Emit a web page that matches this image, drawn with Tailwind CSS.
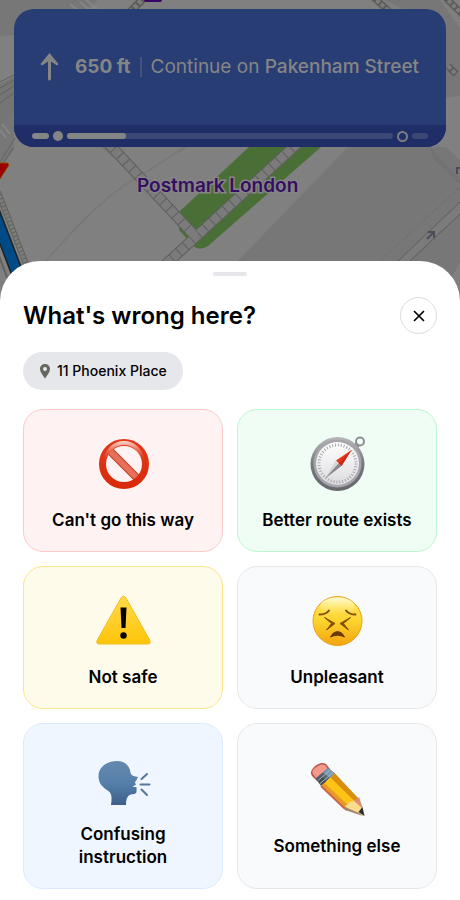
<!DOCTYPE html>
<html lang="en">
<head>
    <meta charset="UTF-8">
    <meta name="viewport" content="width=device-width, initial-scale=1.0">
    <title>Report a problem</title>
    <script src="https://cdn.jsdelivr.net/npm/@tailwindcss/browser@4"></script>
</head>
<body class="bg-[#808080] font-['Inter',sans-serif] text-black">
    <div class="relative flex min-h-screen flex-col overflow-hidden">

        <!-- Map -->
        <svg class="absolute inset-x-0 top-0 h-[300px] w-full" viewBox="0 0 460 300" preserveAspectRatio="xMidYMin slice" aria-hidden="true">
            <rect width="460" height="300" fill="#808080"/>
            <g fill="#777777">
                <path d="M0 0H98L60 32L0 36Z"/>
                <path d="M0 112L14 98V150L0 170Z"/>
                <path d="M384 0H440L460 28V96L446 98V30Z"/>
                <path d="M348 147H446L460 160V262L440 300H200Z"/>
                <path d="M100 147H116L122 154L114 158Z"/>
            </g>
            <path d="M430 147L460 180V184L434 160Z" fill="#727272"/>
            <path d="M0 84L14 77V112L0 126Z" fill="#757573"/>
            <path d="M0 82L14 75M0 88L14 80M0 95L14 86M0 103L14 93" stroke="#62625e" fill="none"/>
            <path d="M80 2L92 12M86 0L98 10M70 4L80 12M2 124L10 134M0 130L6 138" stroke="#868686" stroke-width="2"/>
            <!-- footbridges -->
            <g fill="none">
                <path d="M130 12L144 -2" stroke="#5c5c58" stroke-width="8"/>
                <path d="M130 12L144 -2" stroke="#7c7c7c" stroke-width="5" stroke-dasharray="4 2"/>
                <path d="M372 -4L390 12M444 -4L464 16M448 66L456 74" stroke="#5c5c58" stroke-width="7"/>
                <path d="M372 -4L390 12M444 -4L464 16M448 66L456 74" stroke="#7c7c7c" stroke-width="4" stroke-dasharray="4 2"/>
                <path d="M15 138L0 162M13 148L0 168" stroke="#62625f"/>
            </g>
            <path d="M45 262C80 222 106 196 136 178C158 166 172 154 186 147" fill="none" stroke="#797979" stroke-width="2"/>
            <!-- park -->
            <path d="M249 147L180 211L179 230L188 240C194 250 202 250 208 246L321 147Z" fill="#4a6f36"/>
            <!-- paths with steps -->
            <g fill="none">
                <path d="M108 143L195 236M298 143L164 266" stroke="#5f5f5e" stroke-width="11"/>
                <path d="M108 143L195 236M298 143L164 266" stroke="#7b7b7b" stroke-width="9" stroke-dasharray="8 1"/>
            </g>
            <!-- street on the right -->
            <path d="M460 214L410 261H398L460 202Z" fill="#7b7b7b"/>
            <path d="M460 202L398 261M460 214L410 261" stroke="#5d5d59" fill="none"/>
            <path d="M460 187L380 261" stroke="#717171" fill="none"/>
            <path d="M427 239L434 232M428 232H434V238M457 174V168H461" fill="none" stroke="#4f4b58" stroke-width="2"/>
            <!-- railway on the left -->
            <path d="M-2 192L26 264" stroke="#62625f" stroke-width="6"/>
            <path d="M-2 192L26 264" stroke="#7c7c7a" stroke-width="4" stroke-dasharray="3 1"/>
            <path d="M-8 207L18 275" stroke="#1d2225" stroke-width="13"/>
            <path d="M-8 207L18 275" stroke="#004a86" stroke-width="10"/>
            <path d="M-6 242L8 280" stroke="#62625f" stroke-width="2"/>
            <path d="M-2 163H8L9 165L0 179H-2Z" fill="#9a0000" stroke="#8c5200"/>
            <path d="M144 -3H162V0Q162 2 160 2H146Q144 2 144 0Z" fill="#390066"/>
            <text x="137" y="192" font-size="19" font-weight="600" fill="#350f62" stroke="#858585" stroke-width="3" paint-order="stroke">Postmark London</text>
        </svg>

        <!-- Next turn -->
        <div class="relative mx-3.5 mt-[9px] mb-[114px] flex h-[138px] flex-col overflow-hidden rounded-[20px] bg-[#293d75] text-[#858585]">
            <div class="flex flex-1 items-center pl-[26px] text-[19px]">
                <svg class="h-[30px] w-[19px] shrink-0" viewBox="0 0 19 30" aria-hidden="true">
                    <path d="M9.500 1L18.500 12L17 13.500L11 9.500V27Q11 28.500 9.500 28.500Q8 28.500 8 27V9.500L2 13.500L0.500 12Z" fill="currentColor"/>
                </svg>
                <span class="ml-4 whitespace-nowrap font-bold">650 ft</span>
                <span class="mx-[9px] h-5 w-0.5 bg-[#45517c]"></span>
                <span class="whitespace-nowrap">Continue on <span class="font-medium">Pakenham Street</span></span>
            </div>
            <div class="flex h-[22px] items-center gap-1 bg-[#202e68] px-[18px]">
                <span class="h-1.5 w-[17px] rounded-full bg-[#858585]"></span>
                <span class="size-2.5 rounded-full bg-[#858585]"></span>
                <span class="h-1.5 flex-1 rounded-full bg-[#3b4774]"><span class="block h-full w-[18%] rounded-full bg-[#858585]"></span></span>
                <span class="size-[11px] rounded-full border-2 border-[#7b7d84]"></span>
                <span class="h-1.5 w-4 rounded-full bg-[#3b4774]"></span>
            </div>
        </div>

        <!-- Sheet -->
        <main class="relative mt-auto flex flex-col rounded-t-[40px] bg-white px-[23px] pt-[11px] pb-[11px]">
            <div class="h-1 w-[34px] self-center rounded-full bg-[#e5e7eb]"></div>

            <div class="mt-[21px] flex items-center justify-between">
                <h1 class="text-2xl font-semibold">What's wrong here?</h1>
                <button type="button" aria-label="Close" class="flex size-[37px] items-center justify-center rounded-full border border-[#d9dddc]">
                    <svg class="size-3" viewBox="0 0 12 12" fill="none" stroke="currentColor" stroke-width="1.700" stroke-linecap="round">
                        <path d="M1.500 1.500L10.500 10.500M10.500 1.500L1.500 10.500"/>
                    </svg>
                </button>
            </div>

            <button type="button" class="mt-[18px] flex h-[38px] items-center gap-1.5 self-start rounded-full bg-[#e5e7eb] px-4 text-sm font-medium">
                <svg class="h-4 w-3" viewBox="0 0 12 16" aria-hidden="true">
                    <path fill="#656760" fill-rule="evenodd" d="M6 1C3 1 1 3.200 1 6C1 9.300 4 12.500 6 15.500C8 12.500 11 9.300 11 6C11 3.200 9 1 6 1ZM6 4A2 2 0 1 1 6 8A2 2 0 1 1 6 4Z"/>
                </svg>
                11 Phoenix Place
            </button>

            <div class="mt-[19px] grid grid-cols-2 gap-3.5 text-[17px] leading-[23px] font-semibold">
                <button type="button" class="flex flex-col items-center justify-center gap-[17px] rounded-[20px] border border-[#fecaca] bg-[#fef2f2] px-5 pt-[26px] pb-[19px]">
                    <svg class="size-14" viewBox="0 0 56 56" aria-hidden="true">
                        <defs>
                            <linearGradient id="ban" x1="0" y1="0" x2="0" y2="1">
                                <stop offset="0" stop-color="#df3a1b"/><stop offset="1" stop-color="#d92b0b"/>
                            </linearGradient>
                            <linearGradient id="shine" x1="0" y1="0" x2="0" y2="1">
                                <stop offset="0" stop-color="#ffdcd4"/><stop offset="1" stop-color="#e8684f" stop-opacity="0"/>
                            </linearGradient>
                        </defs>
                        <path d="M14.500 14.500L43 43" stroke="#c83a20" stroke-width="8"/>
                        <path d="M15 15L42.500 42.500" stroke="#e5715a" stroke-width="6"/>
                        <circle cx="29" cy="28" r="21.500" fill="none" stroke="url(#ban)" stroke-width="7"/>
                        <path d="M8.500 23C10.500 13 18.500 5 29 5S47.500 13 49.500 23L46 24C43 14 37 9 29 9S15 14 12 24Z" fill="url(#shine)"/>
                    </svg>
                    <span class="whitespace-nowrap">Can't go this way</span>
                </button>

                <button type="button" class="flex flex-col items-center justify-center gap-[17px] rounded-[20px] border border-[#bbf7d0] bg-[#f0fdf4] px-5 pt-[26px] pb-[19px]">
                    <svg class="size-14" viewBox="0 0 56 56" aria-hidden="true">
                        <defs>
                            <linearGradient id="rim" x1="0" y1="0" x2="0" y2="1">
                                <stop offset="0" stop-color="#b9b9bd"/><stop offset="0.500" stop-color="#77787e"/><stop offset="1" stop-color="#66676b"/>
                            </linearGradient>
                            <linearGradient id="dial" x1="0" y1="0" x2="0" y2="1">
                                <stop offset="0" stop-color="#ffffff"/><stop offset="1" stop-color="#dcdce0"/>
                            </linearGradient>
                        </defs>
                        <path d="M45 12L49 8" stroke="#777a80" stroke-width="5"/>
                        <circle cx="51" cy="5.500" r="4" fill="none" stroke="#8c9092" stroke-width="2"/>
                        <circle cx="28.500" cy="28" r="27" fill="url(#rim)"/>
                        <circle cx="28.500" cy="27.500" r="22.500" fill="none" stroke="#a5a5aa" stroke-width="3"/>
                        <circle cx="28.500" cy="27.500" r="21.500" fill="url(#dial)"/>
                        <circle cx="28.500" cy="27.500" r="18.500" fill="none" stroke="#a3a4a7" stroke-width="3" stroke-dasharray="1 1.900"/>
                        <path d="M42.500 14L32.500 30L27 24.500Z" fill="#e33a20"/>
                        <path d="M42.500 14L32.500 30L29.500 27.500Z" fill="#c92a13"/>
                        <path d="M15.500 43L27 24.500L29.500 27.500Z" fill="#d4d5d7"/>
                        <path d="M15.500 43L32.500 30L29.500 27.500Z" fill="#85878b"/>
                    </svg>
                    <span class="whitespace-nowrap">Better route exists</span>
                </button>

                <button type="button" class="flex flex-col items-center justify-center gap-[17px] rounded-[20px] border border-[#fde68a] bg-[#fffbeb] px-5 pt-[26px] pb-[19px]">
                    <svg class="size-14" viewBox="0 0 56 56" aria-hidden="true">
                        <defs>
                            <linearGradient id="sign" x1="0" y1="0" x2="0" y2="1">
                                <stop offset="0" stop-color="#ffdc46"/><stop offset="0.450" stop-color="#ffd02f"/><stop offset="1" stop-color="#fdc50a"/>
                            </linearGradient>
                        </defs>
                        <path d="M26 5Q28.500 1.500 31 5L55 47.500Q56 51 53 51H4Q1 51 2 47.500Z" fill="url(#sign)" stroke="#f3bd20" stroke-width="1"/>
                        <path d="M25.500 14.500H31.500L30.500 35H26.500Z" fill="#080400"/>
                        <circle cx="28.500" cy="42.500" r="3.200" fill="#080400"/>
                    </svg>
                    Not safe
                </button>

                <button type="button" class="flex flex-col items-center justify-center gap-[17px] rounded-[20px] border border-[#e5e7eb] bg-[#f9fafb] px-5 pt-[26px] pb-[19px]">
                    <svg class="size-14" viewBox="0 0 56 56" aria-hidden="true">
                        <defs>
                            <linearGradient id="face" x1="0" y1="0" x2="0" y2="1">
                                <stop offset="0" stop-color="#ffe76b"/><stop offset="0.500" stop-color="#fdd42d"/><stop offset="1" stop-color="#f3a30f"/>
                            </linearGradient>
                            <linearGradient id="gloss" x1="0" y1="0" x2="0" y2="1">
                                <stop offset="0" stop-color="#fffbd5"/><stop offset="1" stop-color="#fff08a" stop-opacity="0"/>
                            </linearGradient>
                        </defs>
                        <circle cx="28.500" cy="28" r="24.500" fill="url(#face)" stroke="#e9a21d" stroke-width="1"/>
                        <ellipse cx="28.500" cy="13" rx="17" ry="8.500" fill="url(#gloss)"/>
                        <g fill="none" stroke="#835009" stroke-width="2" stroke-linecap="round" stroke-linejoin="round">
                            <path d="M10.500 21.500Q17 21.500 20 17.500M46.500 21.500Q40 21.500 37 17.500"/>
                        </g>
                        <path d="M15.500 24.500L26 30.500L17.500 37L22.500 30.500ZM41.500 24.500L31 30.500L39.500 37L34.500 30.500Z" fill="#835009" stroke="#835009" stroke-width="1" stroke-linejoin="round"/>
                        <path d="M21.500 44Q24 38.500 28.500 38.500T35.500 44Q28.500 40.500 21.500 44Z" fill="#6b3904" stroke="#6b3904" stroke-width="1"/>
                    </svg>
                    Unpleasant
                </button>

                <button type="button" class="flex flex-col items-center justify-center gap-[17px] rounded-[20px] border border-[#dbeafe] bg-[#eff6ff] px-5 pt-[26px] pb-[19px]">
                    <svg class="size-14" viewBox="0 0 56 56" aria-hidden="true">
                        <defs>
                            <linearGradient id="head" x1="0" y1="0" x2="0" y2="1">
                                <stop offset="0" stop-color="#6489ad"/><stop offset="0.500" stop-color="#557fa9"/><stop offset="1" stop-color="#3d5f8a"/>
                            </linearGradient>
                        </defs>
                        <path d="M22 11C30 11 35 16 35.500 23C36.500 26 40 26.500 43 27C42 29.500 40.500 31 40 32.500L41 34.500L37.500 37H41.500V40.500C42 44 39 44 36 44.500C32 45.500 31 50 31 55H16C17 48 17 44 13.500 41C7 37 3.500 33 3.500 26C3.500 17 12 11 22 11Z" fill="url(#head)"/>
                        <path d="M46.500 29L52 24M45.500 34.500H54.500M46.500 39.500L52 45" stroke="#557799" stroke-width="2" stroke-linecap="round"/>
                    </svg>
                    Confusing instruction
                </button>

                <button type="button" class="flex flex-col items-center justify-center gap-[17px] rounded-[20px] border border-[#e5e7eb] bg-[#f9fafb] px-5 pt-[26px] pb-[19px]">
                    <svg class="size-14" viewBox="0 2 56 56" aria-hidden="true">
                        <path d="M3 16Q0 12 5 7Q12 1 17 4L21 9L8 21Z" fill="#b4584b"/>
                        <path d="M4 14Q2 11 6 8Q12 3 16 5L19 9L7 18Z" fill="#f39a8c"/>
                        <path d="M6.500 18.500L19 8L26 13.500L12 26Z" fill="#526371"/>
                        <path d="M14 12.500L19 8L26 13.500L21 18Z" fill="#7699b3"/>
                        <path d="M8 20L13 16L18 22L13 26Z" fill="#454c51"/>
                        <path d="M9 20.500L21 10.500M11 23.500L24 12.500" stroke="#adb8bd" stroke-width="1"/>
                        <path d="M12 26L26 13.500L50 40L38 50L35 48Z" fill="#ffc315"/>
                        <path d="M21.500 17.500L26 13.500L50 39L47.500 43Z" fill="#d88e10"/>
                        <path d="M12 26L15.500 23L40 46L38 50L35 48Z" fill="#e79a24"/>
                        <path d="M12 26L35 48L38 50" stroke="#c7654e" stroke-width="2" fill="none"/>
                        <path d="M36 47L40 42L45 41L50 38L55 56Z" fill="#f9dc8c"/>
                        <path d="M45 41L50 37L54 49Z" fill="#da8f78"/>
                        <path d="M36 47L50 53L54 56L36 50Z" fill="#a38372"/>
                        <path d="M49.500 52L53.500 47L55.500 56Z" fill="#2b2d33"/>
                    </svg>
                    <span class="whitespace-nowrap">Something else</span>
                </button>
            </div>
        </main>
    </div>
</body>
</html>
